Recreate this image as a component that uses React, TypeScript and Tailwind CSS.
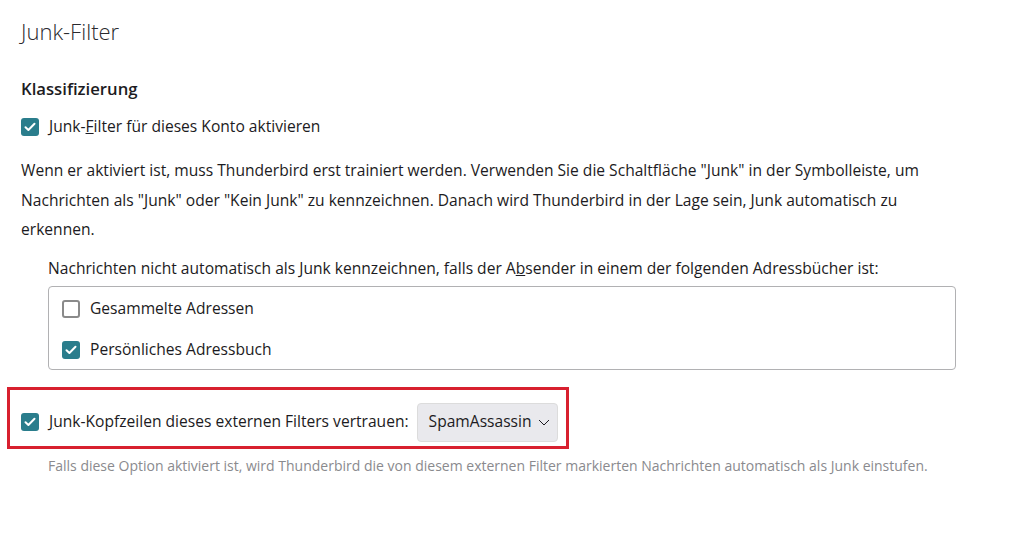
import { useState } from 'react';

// Thunderbird account settings: junk filter pane

function Check({ checked, onClick }: { checked: boolean; onClick?: () => void }) {
  return (
    <span
      onClick={onClick}
      className={`flex h-[18px] w-[18px] shrink-0 items-center justify-center rounded-[3px] ${
        checked ? 'bg-[#2a7d8c]' : 'border-2 border-[#8a8a8a] bg-white'
      }`}
    >
      {checked && (
        <svg width="12" height="10" viewBox="0 0 12 10" fill="none">
          <path d="M1.5 5.2 4.4 8 10.5 1.8" stroke="white" strokeWidth="2" strokeLinecap="round" strokeLinejoin="round" />
        </svg>
      )}
    </span>
  );
}

export default function App() {
  const [enabled, setEnabled] = useState(true);
  const [collected, setCollected] = useState(false);
  const [personal, setPersonal] = useState(true);
  const [trust, setTrust] = useState(true);

  return (
    <div className="min-h-[553px] w-[1027px] bg-white px-[21px] pt-[17px] font-['Open_Sans',sans-serif] text-[15.6px] text-[#1c1b22]">
      <h1 className="h-[28px] text-[22px] font-light leading-[28px] text-[#2a2a2e]">Junk-Filter</h1>

      <h2 className="mt-[32px] h-[24px] text-[16.7px] font-semibold leading-[24px]">Klassifizierung</h2>

      <label className="mt-[14px] flex h-[24px] items-center gap-[10px]">
        <Check checked={enabled} onClick={() => setEnabled(!enabled)} />
        <span>
          Junk-<u>F</u>ilter für dieses Konto aktivieren
        </span>
      </label>

      <p className="mt-[17px] w-[935px] leading-[29.5px]">
        Wenn er aktiviert ist, muss Thunderbird erst trainiert werden. Verwenden Sie die Schaltfläche "Junk" in der
        Symbolleiste, um Nachrichten als "Junk" oder "Kein Junk" zu kennzeichnen. Danach wird Thunderbird in der Lage
        sein, Junk automatisch zu erkennen.
      </p>

      <div className="ml-[27px] w-[908px]">
        <div className="mt-[11px] h-[24px] leading-[24px]">
          Nachrichten nicht automatisch als Junk kennzeichnen, falls der A<u>b</u>sender in einem der folgenden
          Adressbücher ist:
        </div>
        <div className="mt-[6px] h-[84px] rounded-[4px] border border-[#b1b1b3] pt-[2px]">
          <label className="flex h-[41px] items-center gap-[10px] pl-[13px]">
            <Check checked={collected} onClick={() => setCollected(!collected)} />
            <span>Gesammelte Adressen</span>
          </label>
          <label className="flex h-[41px] items-center gap-[10px] pl-[13px]">
            <Check checked={personal} onClick={() => setPersonal(!personal)} />
            <span>Persönliches Adressbuch</span>
          </label>
        </div>
      </div>

      <div className="-ml-[14px] mt-[17px] flex h-[62px] w-[562px] items-start border-[3px] border-[#d8202f] pl-[11px] pt-[13px]">
        <div className="flex h-[39px] items-center">
          <Check checked={trust} onClick={() => setTrust(!trust)} />
          <span className="ml-[10px]">
            <u>J</u>unk-Kopfzeilen dieses externen Filters vertrauen:
          </span>
          <button className="ml-[8px] flex h-[39px] w-[141px] items-center gap-[6px] rounded-[4px] border border-[#dcdcdc] bg-[#e9e9ed] pl-[11px] text-[#1c1b22]">
            <span>SpamAssassin</span>
            <svg width="12" height="7" viewBox="0 0 12 7" fill="none">
              <path d="M1 1l5 5 5-5" stroke="#1c1b22" strokeWidth="1" />
            </svg>
          </button>
        </div>
      </div>

      <div className="ml-[27px] mt-[7px] h-[20px] text-[14px] leading-[20px] text-[#8a8a8e]">
        Falls diese Option aktiviert ist, wird Thunderbird die von diesem externen Filter markierten Nachrichten
        automatisch als Junk einstufen.
      </div>
    </div>
  );
}
